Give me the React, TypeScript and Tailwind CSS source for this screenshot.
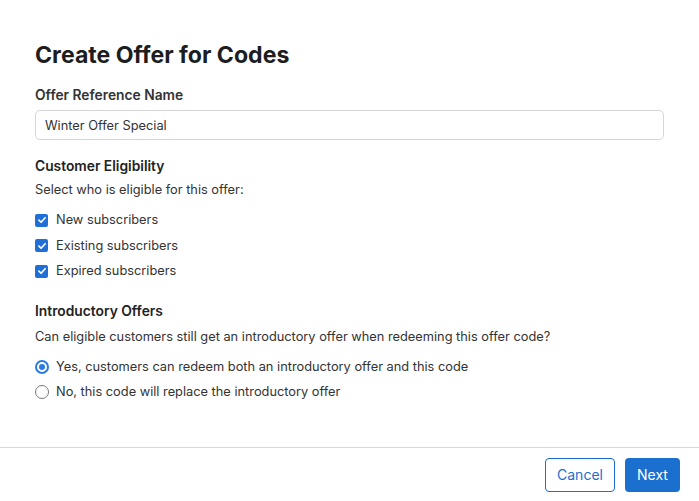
import React, { useState } from 'react';

export default function App() {
  const [eligible, setEligible] = useState({ newSubs: true, existing: true, expired: true });
  const [intro, setIntro] = useState('yes');

  return (
    <div className="w-[699px] h-[501px] bg-white flex flex-col text-[#1d1d1f] font-['Inter','Liberation_Sans',sans-serif] overflow-hidden">
      <div className="flex-1 px-[35px] pt-[40px]">
        <h1 className="text-[23.1px] leading-[30px] font-bold">Create Offer for Codes</h1>

        {/* Reference name */}
        <label className="block mt-[16px] text-[13.8px] leading-[18px] font-semibold text-[#333]">Offer Reference Name</label>
        <input
          defaultValue="Winter Offer Special"
          className="mt-[6px] w-full h-[30px] px-[9px] text-[12.8px] text-[#333] border border-[#d6d6d6] rounded-[5px] outline-none"
        />

        {/* Eligibility */}
        <h2 className="mt-[17px] text-[13.8px] leading-[18px] font-semibold text-[#222]">Customer Eligibility</h2>
        <p className="mt-[6px] text-[12.8px] leading-[18px] text-[#333]">Select who is eligible for this offer:</p>
        <div className="mt-[12px] flex flex-col gap-[7.5px]">
          <Check label="New subscribers" checked={eligible.newSubs} onChange={() => setEligible({ ...eligible, newSubs: !eligible.newSubs })} />
          <Check label="Existing subscribers" checked={eligible.existing} onChange={() => setEligible({ ...eligible, existing: !eligible.existing })} />
          <Check label="Expired subscribers" checked={eligible.expired} onChange={() => setEligible({ ...eligible, expired: !eligible.expired })} />
        </div>

        {/* Intro offers */}
        <h2 className="mt-[22px] text-[13.8px] leading-[18px] font-semibold text-[#222]">Introductory Offers</h2>
        <p className="mt-[8px] text-[12.8px] leading-[18px] text-[#333]">Can eligible customers still get an introductory offer when redeeming this offer code?</p>
        <div className="mt-[12px] flex flex-col gap-[7px]">
          <Radio label="Yes, customers can redeem both an introductory offer and this code" checked={intro === 'yes'} onChange={() => setIntro('yes')} />
          <Radio label="No, this code will replace the introductory offer" checked={intro === 'no'} onChange={() => setIntro('no')} />
        </div>
      </div>

      <div className="border-t border-[#d9d9d9] h-[54px] flex items-center justify-end gap-[10px] pr-[19px]">
        <button className="h-[34px] w-[70px] rounded-[4px] border border-[#1b6fcf] text-[#1b6fcf] text-[14px] bg-white">Cancel</button>
        <button className="h-[34px] w-[55px] rounded-[4px] bg-[#1b6fcf] text-white text-[14px]">Next</button>
      </div>
    </div>
  );
}

function Check({ label, checked, onChange }: { label: string; checked: boolean; onChange: () => void }) {
  return (
    <label className="flex items-center gap-[8px] h-[18px] text-[12.8px] text-[#333] cursor-pointer" onClick={onChange}>
      <span className={`w-[13px] h-[13px] rounded-[2px] flex items-center justify-center ${checked ? 'bg-[#1f6fd6]' : 'border border-[#999] bg-white'}`}>
        {checked && (
          <svg viewBox="0 0 12 12" className="w-[10px] h-[10px]">
            <path d="M2.3 6.2 L4.9 8.7 L9.8 3.3" fill="none" stroke="white" strokeWidth="2" strokeLinecap="round" strokeLinejoin="round" />
          </svg>
        )}
      </span>
      {label}
    </label>
  );
}

function Radio({ label, checked, onChange }: { label: string; checked: boolean; onChange: () => void }) {
  return (
    <label className="flex items-center gap-[7px] h-[18px] text-[12.8px] text-[#333] cursor-pointer" onClick={onChange}>
      <span className={`w-[14px] h-[14px] rounded-full flex items-center justify-center bg-white ${checked ? 'border-2 border-[#2a7be4]' : 'border border-[#777]'}`}>
        {checked && <span className="w-[6px] h-[6px] rounded-full bg-[#2a7be4]" />}
      </span>
      {label}
    </label>
  );
}
